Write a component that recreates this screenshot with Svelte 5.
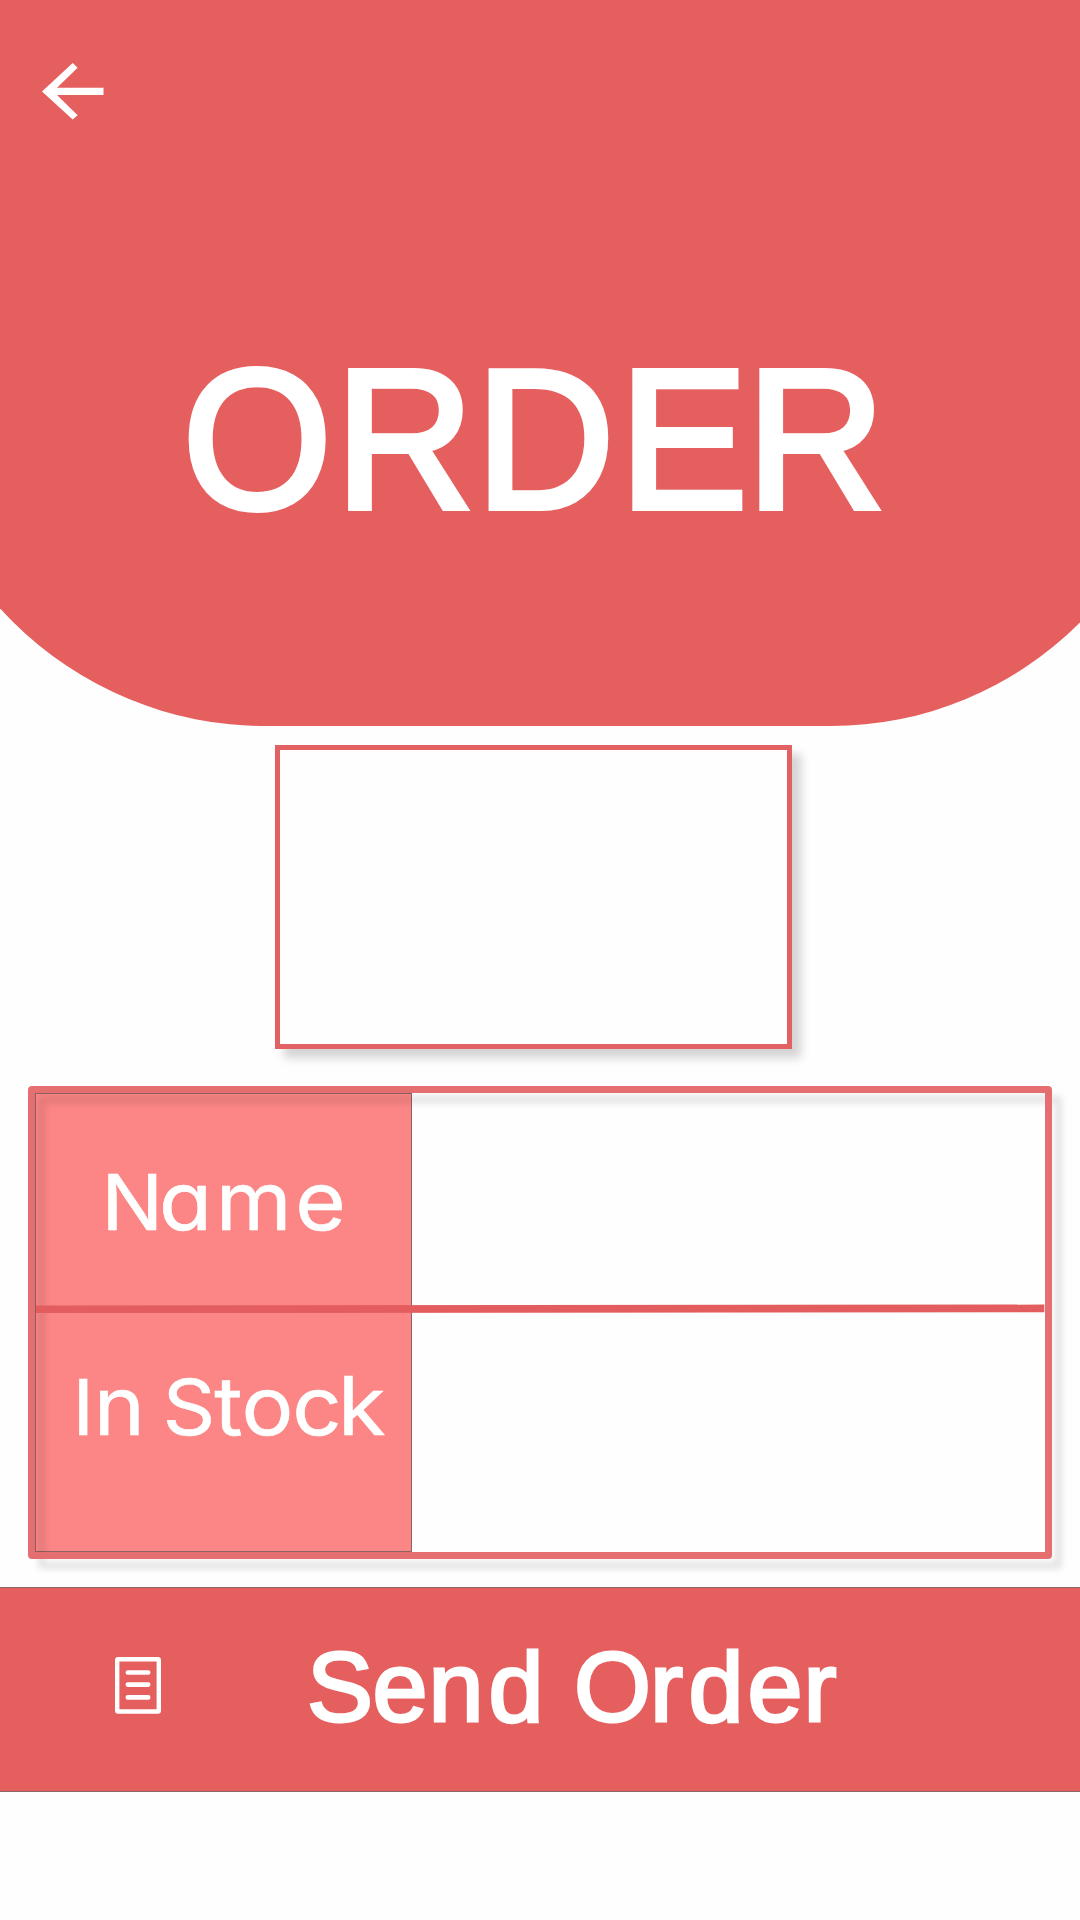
<script>
  // Horizontal pen positions give each label its tight, even tracking.
  const title = { text: 'ORDER', x: '189 347.5 493 642 773.5' };
  const fields = [
    {
      y: 136.3,
      runs: [
        { text: 'N', x: '61.3' },
        { text: 'ame', x: '115 168 242.3', small: true }
      ]
    },
    {
      y: 122,
      runs: [
        { text: 'I', x: '34' },
        { text: 'n ', x: '54 96', small: true },
        { text: 'S', x: '118.5' },
        { text: 'tock', x: '166.5 192 239.5 282.3', small: true }
      ]
    }
  ];
  const action = { text: 'Send Order', x: '307 372.5 428.5 488.5 545 574 650 688.5 747.5 803.5' };
</script>

<main class="screen">
  <header class="hero">
    <div class="hero-shape"></div>
    <div class="hero-content">
      <button class="back" aria-label="Back">
        <svg width="62" height="58" viewBox="42 62 62 58">
          <path d="M42 91.4 72.7 63 77.6 67.8 57 87.7H103.5V95H57L77.6 115.2 72.7 119.6Z" fill="#fff" />
        </svg>
      </button>
      <h1>
        <svg width="1080" height="260" viewBox="0 310 1080 260">
          <text class="title" transform="scale(0.965 1)" x={title.x} y="508.5">{title.text}</text>
        </svg>
      </h1>
    </div>
  </header>

  <section class="preview"></section>

  <section class="details">
    <div class="labels">
      {#each fields as field}
        <div class="label">
          <svg width="375" height="210" viewBox="0 0 375 210">
            <text class="field" transform="scale(1.07 1)" y={field.y}
              >{#each field.runs as run}<tspan class:small={run.small} x={run.x}>{run.text}</tspan>{/each}</text
            >
          </svg>
        </div>
      {/each}
    </div>
    <div class="frame"></div>
    <svg class="divider" width="1024" height="473" viewBox="28 1086 1024 473">
      <path d="M36 1309.3 1044.3 1308.4" stroke="#e45d5e" stroke-width="7.6" />
    </svg>
  </section>

  <button class="send">
    <svg width="1080" height="203" viewBox="0 1588 1080 203">
      <rect x="117.2" y="1659.2" width="41.6" height="52.3" rx="1" fill="none" stroke="#fff" stroke-width="4.4" />
      <path d="M127.8 1672.5H148.2M127.8 1684.6H148.2M127.8 1697.4H148.2" stroke="#fff" stroke-width="4.6" stroke-linecap="round" />
      <text class="action" x={action.x} y="1721">{action.text}</text>
    </svg>
  </button>
</main>

<style>
  :global(body) {
    margin: 0;
    background: #fefefe;
  }
  .screen {
    width: 1080px;
    height: 1920px;
    overflow: hidden;
    display: flex;
    flex-direction: column;
    background: #fefefe;
  }
  svg {
    display: block;
  }
  button {
    border: 0;
    padding: 0;
    background: none;
    display: block;
  }
  .hero {
    display: grid;
    grid-template-columns: 1080px;
    height: 726px;
    flex: none;
  }
  .hero-shape {
    grid-area: 1 / 1;
    width: 1274px;
    margin-left: -92px;
    background: #e65f5f;
    border-radius: 0 0 351px 357px;
  }
  .hero-content {
    grid-area: 1 / 1;
    z-index: 1;
    display: flex;
    flex-direction: column;
    gap: 190px;
    padding-top: 62px;
  }
  .back {
    width: 62px;
    margin-left: 42px;
  }
  h1 {
    margin: 0;
  }
  .title,
  .action {
    font-family: 'Liberation Sans', Arial, sans-serif;
    fill: #fff;
    stroke: #fff;
  }
  .title {
    font-size: 199px;
    font-weight: 400;
    stroke-width: 6px;
  }
  .action {
    font-size: 99px;
    stroke-width: 3px;
  }
  .field {
    font-family: Inter, sans-serif;
    font-size: 76.5px;
    font-feature-settings: 'cv11';
    fill: #fff;
    stroke: #fff;
    stroke-width: 0.6px;
    white-space: pre;
  }
  .small {
    font-size: 81px;
  }
  .preview {
    box-sizing: border-box;
    flex: none;
    width: 517px;
    height: 304px;
    margin: 19px 0 0 275px;
    border: 5px solid #e26162;
    background: #fefefe;
    box-shadow: 9px 9px 9px rgba(0, 0, 0, 0.17);
  }
  .details {
    display: grid;
    grid-template: 473px / 1024px;
    flex: none;
    margin: 37px 0 0 28px;
  }
  .frame,
  .divider {
    grid-area: 1 / 1;
  }
  .divider {
    z-index: 1;
  }
  .frame {
    border: 7px solid #e56f70;
    border-radius: 4px;
    filter: drop-shadow(10px 10px 3px rgba(0, 0, 0, 0.105));
  }
  .labels {
    grid-area: 1 / 1;
    box-sizing: border-box;
    width: 377px;
    height: 459px;
    margin: 7px;
    display: grid;
    grid-template-rows: 219px 238px;
    border: 1px solid #8d6262;
    background: #fc8686;
  }
  .label {
    display: flex;
  }
  .send {
    box-sizing: border-box;
    flex: none;
    width: 1080px;
    height: 205px;
    margin-top: 28px;
    border: solid #8b6868;
    border-width: 1px 0;
    background: #e65f5f;
  }
</style>
